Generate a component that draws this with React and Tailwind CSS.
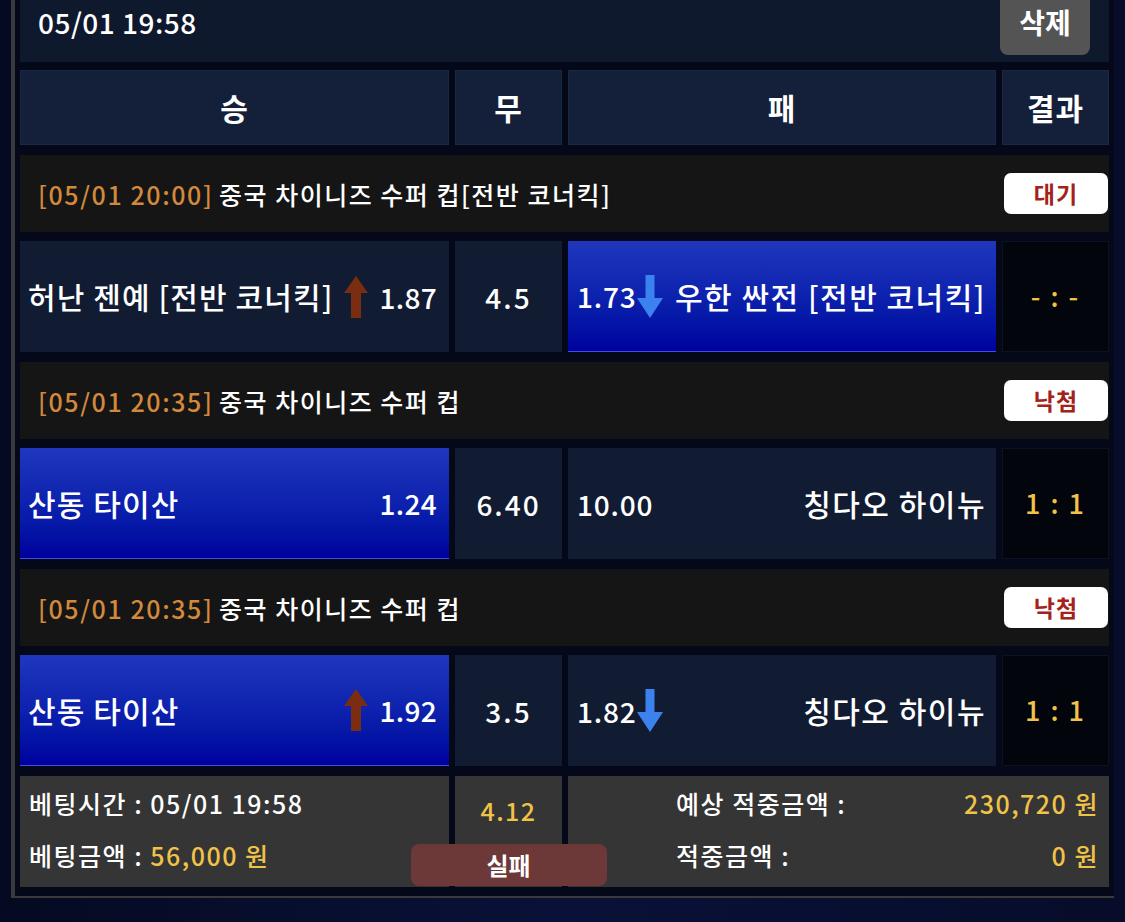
import React from "react";

const FONT = "font-['Noto_Sans_CJK_KR','Noto_Sans',sans-serif]";

function UpArrow() {
  return (
    <svg width="24" height="42" viewBox="0 0 24 42" className="shrink-0">
      <path d="M12 0 L24 17 L17 17 L17 42 L7 42 L7 17 L0 17 Z" fill="#7a2d10" />
    </svg>
  );
}

function DownArrow() {
  return (
    <svg width="26" height="43" viewBox="0 0 26 43" className="shrink-0">
      <path d="M8.5 0 H17.5 V23 H26 L13 43 L0 23 H8.5 Z" fill="#3b82ee" />
    </svg>
  );
}

const games = [
  {
    time: "[05/01 20:00]",
    league: "중국 차이니즈 수퍼 컵[전반 코너킥]",
    status: "대기",
    home: "허난 젠예 [전반 코너킥]",
    homeOdds: "1.87",
    homeArrow: "up",
    draw: "4.5",
    away: "우한 싼전 [전반 코너킥]",
    awayOdds: "1.73",
    awayArrow: "down",
    pick: "away",
    result: "- : -",
  },
  {
    time: "[05/01 20:35]",
    league: "중국 차이니즈 수퍼 컵",
    status: "낙첨",
    home: "산동 타이산",
    homeOdds: "1.24",
    homeArrow: null,
    draw: "6.40",
    away: "칭다오 하이뉴",
    awayOdds: "10.00",
    awayArrow: null,
    pick: "home",
    result: "1 : 1",
  },
  {
    time: "[05/01 20:35]",
    league: "중국 차이니즈 수퍼 컵",
    status: "낙첨",
    home: "산동 타이산",
    homeOdds: "1.92",
    homeArrow: "up",
    draw: "3.5",
    away: "칭다오 하이뉴",
    awayOdds: "1.82",
    awayArrow: "down",
    pick: "home",
    result: "1 : 1",
  },
];

const NORMAL = "bg-[#111c32]";
const PICKED = "bg-gradient-to-b from-[#1f36bd] to-[#00009e] border-b border-[#4050dc]";

function LeagueBar({ g }) {
  return (
    <div className="mt-[10px] h-[77px] bg-[#151515] flex items-center justify-between pl-[18px] pr-[1px]">
      <div className="text-[25px] leading-[32px] text-white whitespace-nowrap font-medium">
        <span className="text-[#d3893b] tracking-[1.6px]">{g.time}</span>{" "}
        <span className="tracking-[1.5px]">{g.league}</span>
      </div>
      <div className="w-[104px] h-[41px] rounded-[7px] bg-white flex items-center justify-center text-[23px] font-bold text-[#a3221a] tracking-[1px]">
        {g.status}
      </div>
    </div>
  );
}

function MatchRow({ g }) {
  return (
    <div className="mt-[9px] grid grid-cols-[429px_107px_428px_107px] gap-[6px] h-[111px]">
      <div
        className={`${g.pick === "home" ? PICKED : NORMAL} flex items-center pl-[8px] pr-[12px] text-white font-medium`}
      >
        <span className="whitespace-nowrap text-[30px] tracking-[1.1px]">{g.home}</span>
        <div className="ml-auto flex items-center gap-[12px]">
          {g.homeArrow === "up" && <UpArrow />}
          <span className="text-[28px] tracking-[0.3px]">{g.homeOdds}</span>
        </div>
      </div>
      <div className={`${NORMAL} flex items-center justify-center text-white text-[28px] font-medium tracking-[2px]`}>
        {g.draw}
      </div>
      <div
        className={`${g.pick === "away" ? PICKED : NORMAL} flex items-center pl-[9px] pr-[10px] text-white font-medium`}
      >
        <span className="text-[28px] tracking-[0.8px]">{g.awayOdds}</span>
        {g.awayArrow === "down" && (
          <span className="ml-[1px]">
            <DownArrow />
          </span>
        )}
        <span className="ml-auto whitespace-nowrap text-[30px] tracking-[1.5px]">{g.away}</span>
      </div>
      <div className="bg-[#03050c] border border-[#0d1222] flex items-center justify-center text-[#f0c348] text-[27px] font-medium whitespace-pre tracking-[2px]">
        {g.result}
      </div>
    </div>
  );
}

export default function App() {
  return (
    <div
      className={`${FONT} relative w-[1125px] h-[922px] overflow-hidden bg-gradient-to-r from-[#050a22] via-[#0a1138] to-[#070c2a]`}
    >
      <div className="ml-[11px] w-[1103px] border-l-[4px] border-b-2 border-[#3a3a3a] bg-[#040818] pl-[5px] pb-[9px]">
        <div className="w-[1089px]">
          {/* top header */}
          <div className="h-[62px] bg-[#0f192d] flex items-start justify-between pl-[18px] pr-[19px]">
            <span className="mt-[6px] text-[28px] leading-[32px] text-white font-medium tracking-[0.5px]">
              05/01 19:58
            </span>
            <div className="-mt-[8px] h-[63px] w-[90px] rounded-[8px] bg-[#545454] flex justify-center pt-[14px]">
              <span className="text-[28px] leading-[32px] text-white font-bold">삭제</span>
            </div>
          </div>

          {/* column header */}
          <div className="mt-[8px] grid grid-cols-[429px_107px_428px_107px] gap-[6px] h-[75px]">
            {["승", "무", "패", "결과"].map((t) => (
              <div
                key={t}
                className="bg-[#142039] border border-[#1b2843] flex items-center justify-center text-white text-[30px] font-bold tracking-[1px]"
              >
                {t}
              </div>
            ))}
          </div>

          {games.map((g, i) => (
            <React.Fragment key={i}>
              <LeagueBar g={g} />
              <MatchRow g={g} />
            </React.Fragment>
          ))}

          {/* footer */}
          <div className="mt-[10px] grid grid-cols-[429px_107px_428px_107px] gap-[6px] h-[111px]">
            <div className="bg-[#353535] pl-[9px] pt-[2px] text-white text-[25px] font-medium tracking-[1.5px]">
              <div className="h-[52px] flex items-center whitespace-pre">베팅시간 : 05/01 19:58</div>
              <div className="h-[52px] flex items-center whitespace-pre">
                베팅금액 : <span className="text-[#f0c348]">56,000 원</span>
              </div>
            </div>
            <div className="relative bg-[#353535] flex justify-center pt-[14px]">
              <span className="text-[#f0c348] text-[25px] leading-[40px] font-medium tracking-[1.5px]">4.12</span>
              <div className="absolute z-10 left-1/2 -translate-x-1/2 top-[68px] w-[196px] h-[42px] rounded-[8px] bg-[#6c3838] flex items-center justify-center text-white text-[24px] font-bold">
                실패
              </div>
            </div>
            <div className="col-span-2 bg-[#353535] pl-[108px] pr-[10px] pt-[2px] text-white text-[25px] font-medium tracking-[1.5px]">
              <div className="h-[52px] flex items-center justify-between">
                <span>예상 적중금액 :</span>
                <span className="text-[#f0c348]">230,720 원</span>
              </div>
              <div className="h-[52px] flex items-center justify-between">
                <span>적중금액 :</span>
                <span className="text-[#f0c348]">0 원</span>
              </div>
            </div>
          </div>
        </div>
      </div>
    </div>
  );
}
